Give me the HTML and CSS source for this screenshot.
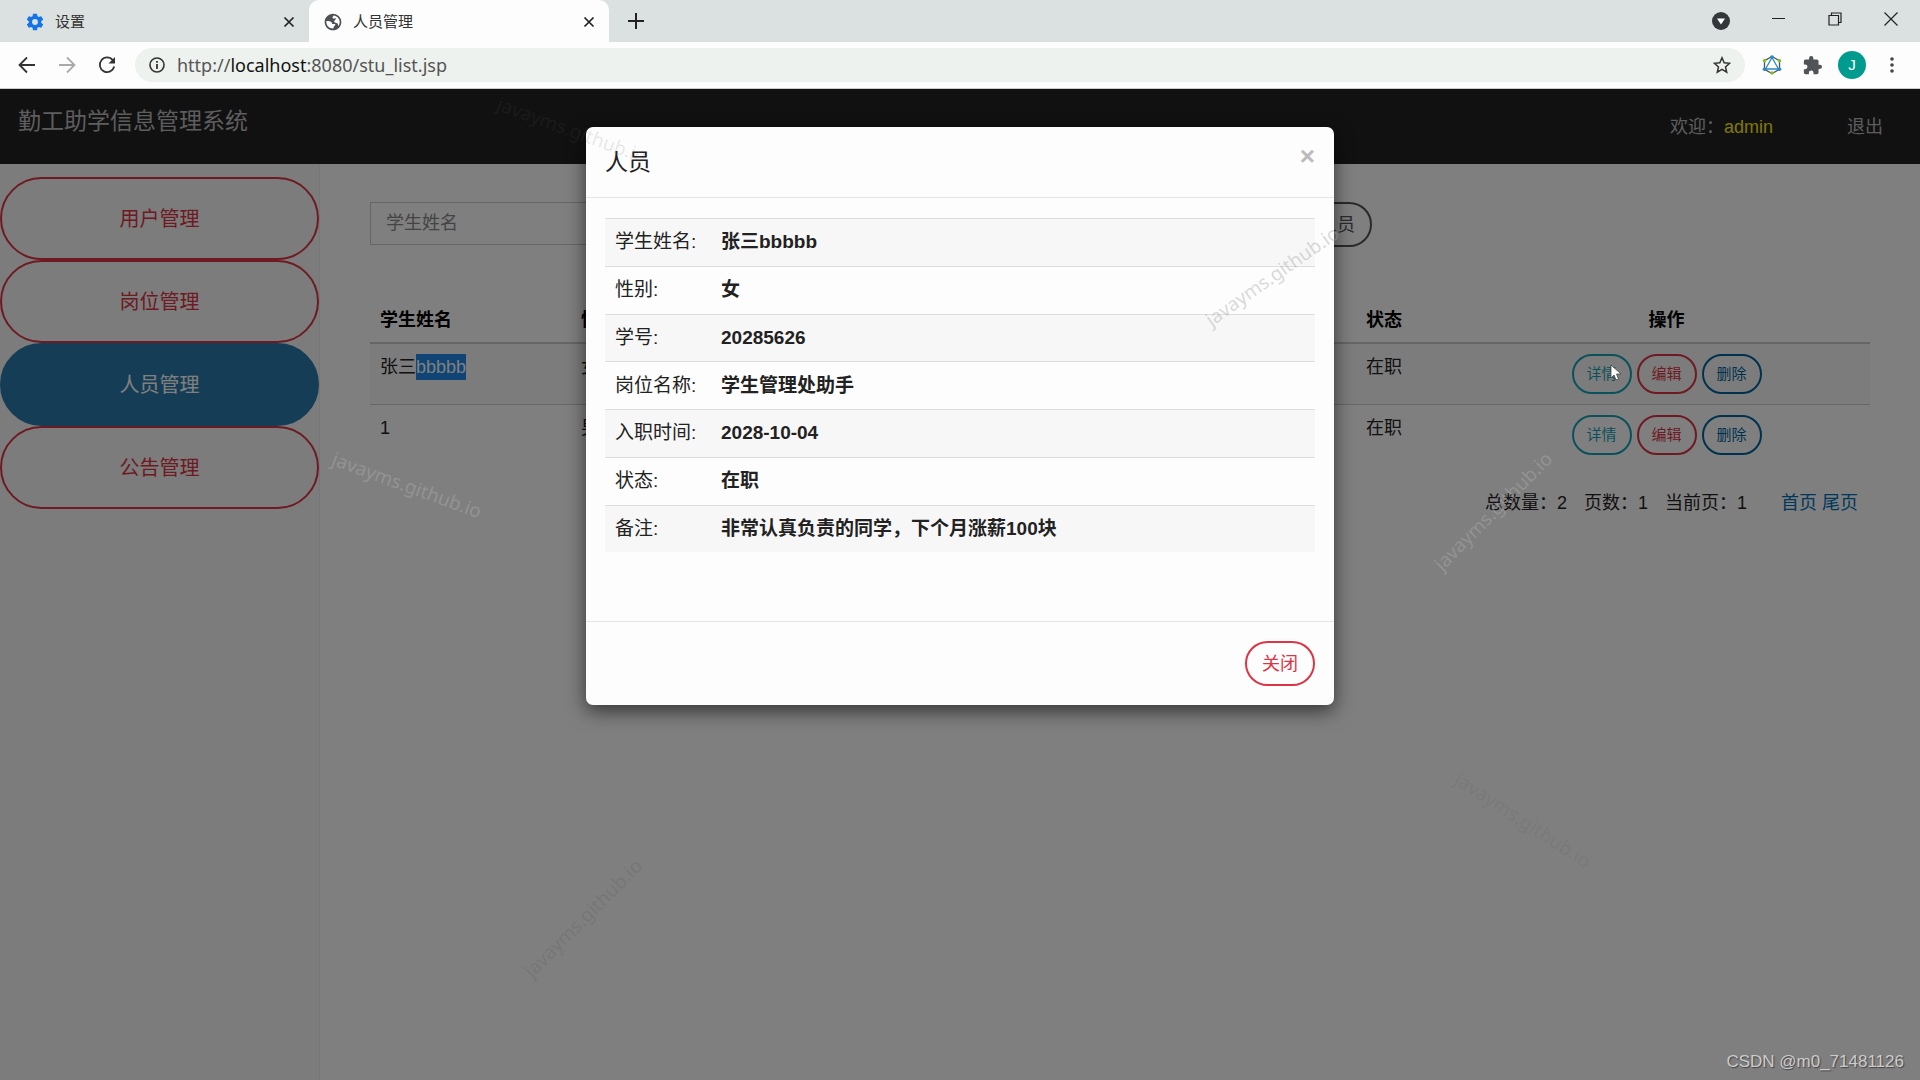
FILE: index.html
```html
<!DOCTYPE html>
<html lang="zh-CN">
<head>
<meta charset="utf-8">
<title>人员管理</title>
<link rel="stylesheet" href="styles.css">
</head>
<body>
<div class="browser">
  <header class="tabstrip">
    <div class="tab">
      <svg class="icon" viewBox="0 0 24 24" width="20" height="20"><path fill="#1473e6" d="M19.43 12.98c.04-.32.07-.64.07-.98s-.03-.66-.07-.98l2.11-1.65c.19-.15.24-.42.12-.64l-2-3.46c-.12-.22-.39-.3-.61-.22l-2.49 1c-.52-.4-1.08-.73-1.69-.98l-.38-2.65C14.46 2.18 14.25 2 14 2h-4c-.25 0-.46.18-.49.42l-.38 2.65c-.61.25-1.17.59-1.69.98l-2.49-1c-.23-.09-.49 0-.61.22l-2 3.46c-.13.22-.07.49.12.64l2.11 1.65c-.04.32-.07.65-.07.98s.03.66.07.98l-2.11 1.65c-.19.15-.24.42-.12.64l2 3.46c.12.22.39.3.61.22l2.49-1c.52.4 1.08.73 1.69.98l.38 2.65c.03.24.24.42.49.42h4c.25 0 .46-.18.49-.42l.38-2.65c.61-.25 1.17-.59 1.69-.98l2.49 1c.23.09.49 0 .61-.22l2-3.46c.12-.22.07-.49-.12-.64l-2.11-1.65zM12 15.500a3.500 3.500 0 1 1 0-7 3.500 3.500 0 0 1 0 7z"/></svg>
      <span class="tab-title">设置</span>
      <button class="icon-btn" aria-label="关闭标签页"><svg viewBox="0 0 12 12" width="12" height="12"><path d="M1.500 1.500l9 9M10.500 1.500l-9 9" stroke="#222" stroke-width="1.700"/></svg></button>
    </div>
    <div class="tab tab-active">
      <svg class="icon" viewBox="0 0 24 24" width="20" height="20"><path fill="#4d5156" d="M12 2C6.480 2 2 6.480 2 12s4.480 10 10 10 10-4.480 10-10S17.520 2 12 2zM4 12.100c0-.4.030-.8.100-1.200l.6-.1c2.200 0 4.300.2 5.200 1.200.9.900.5 2.100 1.800 2.300 1.100.2 2.800-.3 3.100.7.300 1.200-1.700 1.500-1.800 2.700-.1.800-.2 1.500-1 2.200C7.600 19.900 4 16.400 4 12.100zM18.300 16.800c-.3-1.200-.1-2.500-1.300-3.300-1.300-.8-2.700-.2-3.400-1.600-.5-1.100.3-2.200 1.200-2.700.7-.4.900-1.200.2-1.600-.9-.5-2.300.8-3.200 0-1-.9.300-2.100.9-3.400C16.700 4.500 20 7.900 20 12c0 1.800-.6 3.500-1.700 4.800z"/></svg>
      <span class="tab-title">人员管理</span>
      <button class="icon-btn" aria-label="关闭标签页"><svg viewBox="0 0 12 12" width="12" height="12"><path d="M1.500 1.500l9 9M10.500 1.500l-9 9" stroke="#222" stroke-width="1.700"/></svg></button>
    </div>
    <button class="icon-btn new-tab" aria-label="新标签页"><svg viewBox="0 0 16 16" width="16" height="16"><path d="M8 0v16M0 8h16" stroke="#222" stroke-width="2"/></svg></button>
    <div class="window-controls">
      <button class="icon-btn" aria-label="搜索标签页"><svg viewBox="0 -4 18 22" width="18" height="22"><circle cx="9" cy="9" r="9" fill="#333739"/><path d="M5 6.500h8L9 12.500z" fill="#fff"/></svg></button>
      <button class="icon-btn" aria-label="最小化"><svg viewBox="0 0 14 14" width="14" height="14"><path d="M0 6.500h13" stroke="#222"/></svg></button>
      <button class="icon-btn" aria-label="还原"><svg viewBox="0 0 14 14" width="14" height="14"><path d="M3.500 3.500v-2.500h9.500v9.500h-2.500M1 3.500h9.500v9.500H1z" fill="none" stroke="#222" stroke-width="1.200"/></svg></button>
      <button class="icon-btn" aria-label="关闭"><svg viewBox="0 0 14 14" width="14" height="14"><path d="M.5.5l13 13M13.500.5l-13 13" stroke="#222" stroke-width="1.200"/></svg></button>
    </div>
  </header>
  <div class="toolbar">
    <button class="icon-btn" aria-label="后退"><svg viewBox="0 0 18 18" width="18" height="18"><path d="M17 9H2M9 1.500L1.500 9 9 16.500" fill="none" stroke="#333" stroke-width="1.800"/></svg></button>
    <button class="icon-btn" aria-label="前进"><svg viewBox="0 0 18 18" width="18" height="18"><path d="M1 9h15M9 1.500L16.500 9 9 16.500" fill="none" stroke="#aaa" stroke-width="1.800"/></svg></button>
    <button class="icon-btn" aria-label="重新加载"><svg viewBox="0 0 18 18" width="18" height="18"><path d="M14.800 4.200A7.300 7.300 0 1 0 16.200 10.500" fill="none" stroke="#333" stroke-width="1.800"/><path d="M17 1v6.500h-6.500z" fill="#333"/></svg></button>
    <div class="omnibox">
      <svg class="icon" viewBox="0 0 16 16" width="16" height="16"><circle cx="8" cy="8" r="7" fill="none" stroke="#333" stroke-width="1.600"/><path d="M8 7v5M8 4v1.800" stroke="#333" stroke-width="1.800"/></svg>
      <div class="url">http://<span class="url-host">localhost</span>:8080/stu_list.jsp</div>
      <button class="icon-btn" aria-label="收藏"><svg viewBox="0 0 18 18" width="18" height="18"><path d="M9 1.800l2.200 5 5.400.5-4.100 3.600 1.200 5.300L9 13.400l-4.700 2.800 1.200-5.300L1.400 7.300l5.400-.5z" fill="none" stroke="#333" stroke-width="1.500"/></svg></button>
    </div>
    <div class="extensions">
      <button class="icon-btn" aria-label="扩展"><svg viewBox="0 0 20 20" width="20" height="20"><path d="M10 1.500l7.500 4.200v8.600L10 18.500l-7.500-4.200V5.700z" fill="none" stroke="#555" stroke-width="1.300"/><path d="M10 2.500L3.500 14h13z" fill="none" stroke="#2689c9" stroke-width="1.300"/><g fill="#2689c9"><circle cx="10" cy="2" r="1.800"/><circle cx="2.500" cy="14.300" r="1.800"/><circle cx="17.500" cy="14.300" r="1.800"/></g><g fill="#7cc32c"><circle cx="2.500" cy="5.700" r="1.800"/><circle cx="17.500" cy="5.700" r="1.800"/><circle cx="10" cy="18" r="1.800"/></g></svg></button>
      <button class="icon-btn" aria-label="扩展程序"><svg viewBox="1 1 22 22" width="19" height="19"><path fill="#505458" d="M20.500 11H19V7c0-1.100-.9-2-2-2h-4V3.500a2.500 2.500 0 0 0-5 0V5H4c-1.100 0-2 .9-2 2v3.800h1.500a2.700 2.700 0 0 1 0 5.400H2V20c0 1.100.9 2 2 2h3.800v-1.500a2.700 2.700 0 0 1 5.400 0V22H17c1.100 0 2-.9 2-2v-4h1.500a2.500 2.500 0 0 0 0-5z"/></svg></button>
      <button class="icon-btn"><span class="avatar">J</span></button>
      <button class="icon-btn" aria-label="菜单"><svg viewBox="0 0 4 16" width="4" height="16"><g fill="#444"><circle cx="2" cy="2" r="1.800"/><circle cx="2" cy="8" r="1.800"/><circle cx="2" cy="14" r="1.800"/></g></svg></button>
    </div>
  </div>

  <div class="page">
    <nav class="navbar">
      <a class="brand" href="#">勤工助学信息管理系统</a>
      <div class="user"><span>欢迎：<span class="user-name">admin</span></span><a href="#">退出</a></div>
    </nav>
    <div class="layout">
      <aside class="sidebar">
        <a class="menu-item" href="#">用户管理</a>
        <a class="menu-item" href="#">岗位管理</a>
        <a class="menu-item menu-current" href="#">人员管理</a>
        <a class="menu-item" href="#">公告管理</a>
      </aside>
      <main class="content">
        <form class="search">
          <input class="search-input" type="text" placeholder="学生姓名" aria-label="学生姓名">
          <button class="btn btn-dark" type="button">添加人员</button>
        </form>
        <table class="list">
          <colgroup><col class="c-name"><col class="c-sex"><col class="c-no"><col class="c-job"><col class="c-date"><col class="c-state"><col class="c-op"></colgroup>
          <thead><tr><th>学生姓名</th><th>性别</th><th>学号</th><th>岗位名称</th><th>入职时间</th><th>状态</th><th class="op">操作</th></tr></thead>
          <tbody>
            <tr><td>张三<span class="selected">bbbbb</span></td><td>女</td><td>20285626</td><td>学生管理处助手</td><td>2028-10-04</td><td>在职</td><td><div class="actions"><button class="btn btn-sm btn-teal">详情</button><button class="btn btn-sm btn-red">编辑</button><button class="btn btn-sm btn-blue">删除</button></div></td></tr>
            <tr><td>1</td><td>男</td><td>1</td><td>学生管理处助手</td><td>2028-10-04</td><td>在职</td><td><div class="actions"><button class="btn btn-sm btn-teal">详情</button><button class="btn btn-sm btn-red">编辑</button><button class="btn btn-sm btn-blue">删除</button></div></td></tr>
          </tbody>
        </table>
        <div class="pager">
          <span>总数量：2</span><span>页数：1</span><span>当前页：1</span>
          <div class="pager-links"><a href="#">首页</a> <a href="#">尾页</a></div>
        </div>
      </main>
    </div>
    <div class="backdrop">
      <section class="modal" role="dialog" aria-labelledby="modal-title">
        <div class="modal-header"><h4 class="modal-title" id="modal-title">人员</h4><button class="close" aria-label="关闭">×</button></div>
        <div class="modal-body">
          <table class="detail">
            <tr><th scope="row">学生姓名:</th><td>张三bbbbb</td></tr>
            <tr><th scope="row">性别:</th><td>女</td></tr>
            <tr><th scope="row">学号:</th><td>20285626</td></tr>
            <tr><th scope="row">岗位名称:</th><td>学生管理处助手</td></tr>
            <tr><th scope="row">入职时间:</th><td>2028-10-04</td></tr>
            <tr><th scope="row">状态:</th><td>在职</td></tr>
            <tr><th scope="row">备注:</th><td>非常认真负责的同学，下个月涨薪100块</td></tr>
          </table>
        </div>
        <div class="modal-footer"><button class="btn btn-close">关闭</button></div>
      </section>
    </div>
  </div>
</div>
<div class="mark mark-1">javayms.github.io</div>
<div class="mark mark-2">javayms.github.io</div>
<div class="mark mark-3">javayms.github.io</div>
<div class="mark mark-4">javayms.github.io</div>
<div class="mark mark-5">javayms.github.io</div>
<div class="mark mark-6">javayms.github.io</div>
<svg class="pointer" viewBox="0 0 12 18" width="12" height="18"><path d="M1 1v13l3-3 2 5 2.500-1-2-5H11z" fill="#fff" stroke="#444" stroke-width=".8"/></svg>
<div class="credit">CSDN @m0_71481126</div>
</body>
</html>
```
FILE: styles.css
```css
* { box-sizing: border-box; }
body {
  margin: 0;
  font: 18px/26px "Liberation Sans", "Noto Sans CJK SC", sans-serif;
  color: #222;
  overflow: hidden;
}
button, input { font: inherit; color: inherit; }
button { cursor: pointer; }
a { color: inherit; text-decoration: none; }
svg { display: block; }

.browser { display: flex; flex-direction: column; min-height: 100vh; }
.icon { flex: none; }
.icon-btn { display: flex; padding: 0; border: 0; background: none; flex: none; }

/* Tab strip */
.tabstrip { display: flex; align-items: center; height: 42px; background: #dbe1e1; }
.tab { display: flex; align-items: center; gap: 10px; width: 300px; height: 42px; padding: 2px 14px 0; font-size: 15px; color: #333; }
.tab:first-child { width: 309px; padding-left: 25px; }
.tab-active { background: #fdfdfd; border-radius: 10px 10px 0 0; }
.tab-title { flex: 1; }
.new-tab { margin-left: 19px; }
.window-controls { display: flex; align-items: center; gap: 42px; margin-left: auto; padding: 0 22px 5px 0; }

/* Toolbar */
.toolbar { display: flex; align-items: center; gap: 22px; height: 47px; padding: 0 8px 0 18px; background: #fdfdfd; border-bottom: 1px solid #ccc; }
.omnibox { flex: 1; display: flex; align-items: center; gap: 12px; height: 34px; padding: 0 14px; margin-left: -3px; border-radius: 17px; background: #edf2ee; }
.url { flex: 1; font-family: "Noto Sans", sans-serif; font-size: 18px; color: #555; }
.url-host { color: #111; }
.extensions { display: flex; align-items: center; margin-left: -15px; }
.extensions .icon-btn { width: 40px; justify-content: center; }
.avatar { width: 28px; height: 28px; line-height: 28px; text-align: center; border-radius: 14px; background: #009b8f; color: #fff; font-size: 15px; }

/* Application */
.page { position: relative; flex: 1; display: flex; flex-direction: column; background: #fff; }
.navbar { display: flex; justify-content: space-between; height: 75px; padding: 19px 37px 0 18px; background: #222; color: #bbb; }
.brand { font-size: 23px; }
.user { display: flex; gap: 74px; padding-top: 6px; }
.user-name { color: #ffee10; }
.layout { flex: 1; display: flex; }
.sidebar { flex: none; width: 320px; padding-top: 13px; background: #f8f8f8; border-right: 1px solid #eee; }
.menu-item { display: flex; align-items: center; justify-content: center; height: 83px; border: 2px solid #dc3545; border-radius: 42px; font-size: 20px; color: #dc3545; }
.menu-current { background: #2c7bad; border-color: #2c7bad; color: #fff; }
.content { flex: 1; padding: 38px 50px; }
.search { display: flex; justify-content: space-between; width: 1002px; }
.search-input { width: 400px; height: 43px; padding: 0 15px; border: 1px solid #ccc; background: #fff; }
.search-input::placeholder { color: #888; }

.btn { height: 45px; padding: 0 15px; border: 2px solid; border-radius: 23px; background: none; }
.btn-sm { width: 60px; height: 40px; padding: 0; border-radius: 20px; font-size: 15px; }
.btn-dark { color: #555; }
.btn-teal { color: #17a2b8; }
.btn-red { color: #dc3545; }
.btn-blue { color: #00659f; }
.btn-close { color: #dc3545; }

.list { width: 100%; margin-top: 50px; border-collapse: collapse; table-layout: fixed; }
.list th { height: 46px; padding: 0 10px; text-align: left; color: #000; }
.list td { height: 61px; padding: 10px; vertical-align: top; border-top: 1px solid #ccc; }
.list tbody tr:first-child td { border-top: 2px solid #ccc; background: #f9f9f9; }
.list th.op { text-align: center; }
.c-name { width: 201px; }
.c-sex { width: 95px; }
.c-no { width: 200px; }
.c-job { width: 270px; }
.c-date { width: 220px; }
.c-state { width: 107px; }
.selected { display: inline-block; background: #2088e8; color: #fff; }
.actions { display: flex; justify-content: center; gap: 5px; }
.pager { display: flex; justify-content: flex-end; gap: 17px; margin-top: 24px; padding-right: 12px; }
.pager-links { margin-left: 17px; color: #0070b8; }

/* Dialog */
.backdrop { position: absolute; inset: 0; padding-top: 38px; background: rgba(0, 0, 0, 0.5); }
.modal { width: 748px; margin: 0 auto; border-radius: 7px; background: #fdfdfd; box-shadow: 0 6px 19px rgba(0, 0, 0, 0.6); }
.modal-header { display: flex; justify-content: space-between; height: 71px; padding: 16px 19px; border-bottom: 1px solid #e5e5e5; }
.modal-title { margin: 0; padding-top: 3px; font-size: 23px; line-height: 32px; font-weight: 400; }
.close { height: 26px; padding: 0; border: 0; background: none; font-size: 26px; line-height: 26px; font-weight: 700; color: #bbb; }
.modal-body { padding: 20px 19px 69px; }
.detail { width: 100%; height: 334px; border-collapse: collapse; font-size: 19px; line-height: 26px; }
.detail tr { border-top: 1px solid #ddd; }
.detail tr:nth-child(odd) { background: #f7f7f7; }
.detail th { width: 106px; padding: 0 10px; font-weight: 400; text-align: left; white-space: nowrap; }
.detail td { padding: 0 10px; font-weight: 700; }
.modal-footer { display: flex; justify-content: flex-end; padding: 19px; border-top: 1px solid #e5e5e5; }

/* Floating marks */
.mark { position: absolute; font: 19px/26px "Noto Sans", sans-serif; white-space: nowrap; transform: translate(-50%, -50%) rotate(20deg); color: rgba(160, 160, 160, 0.4); }
.mark-1 { left: 407px; top: 485px; color: rgba(180, 180, 180, 0.4); }
.mark-2 { left: 1272px; top: 276px; transform: translate(-50%, -50%) rotate(-35deg); }
.mark-3 { left: 1493px; top: 511px; transform: translate(-50%, -50%) rotate(-45deg); color: rgba(180, 180, 180, 0.4); }
.mark-4 { left: 1523px; top: 820px; transform: translate(-50%, -50%) rotate(33deg); color: rgba(95, 95, 95, 0.2); }
.mark-5 { left: 583px; top: 918px; transform: translate(-50%, -50%) rotate(-45deg); color: rgba(95, 95, 95, 0.3); }
.mark-6 { left: 572px; top: 130px; color: rgba(90, 90, 90, 0.15); }
.pointer { position: absolute; left: 1610px; top: 364px; }
.credit { position: absolute; right: 16px; bottom: 5px; font-size: 17px; color: #ccc; text-shadow: 1px 1px 1px #444; }
```
